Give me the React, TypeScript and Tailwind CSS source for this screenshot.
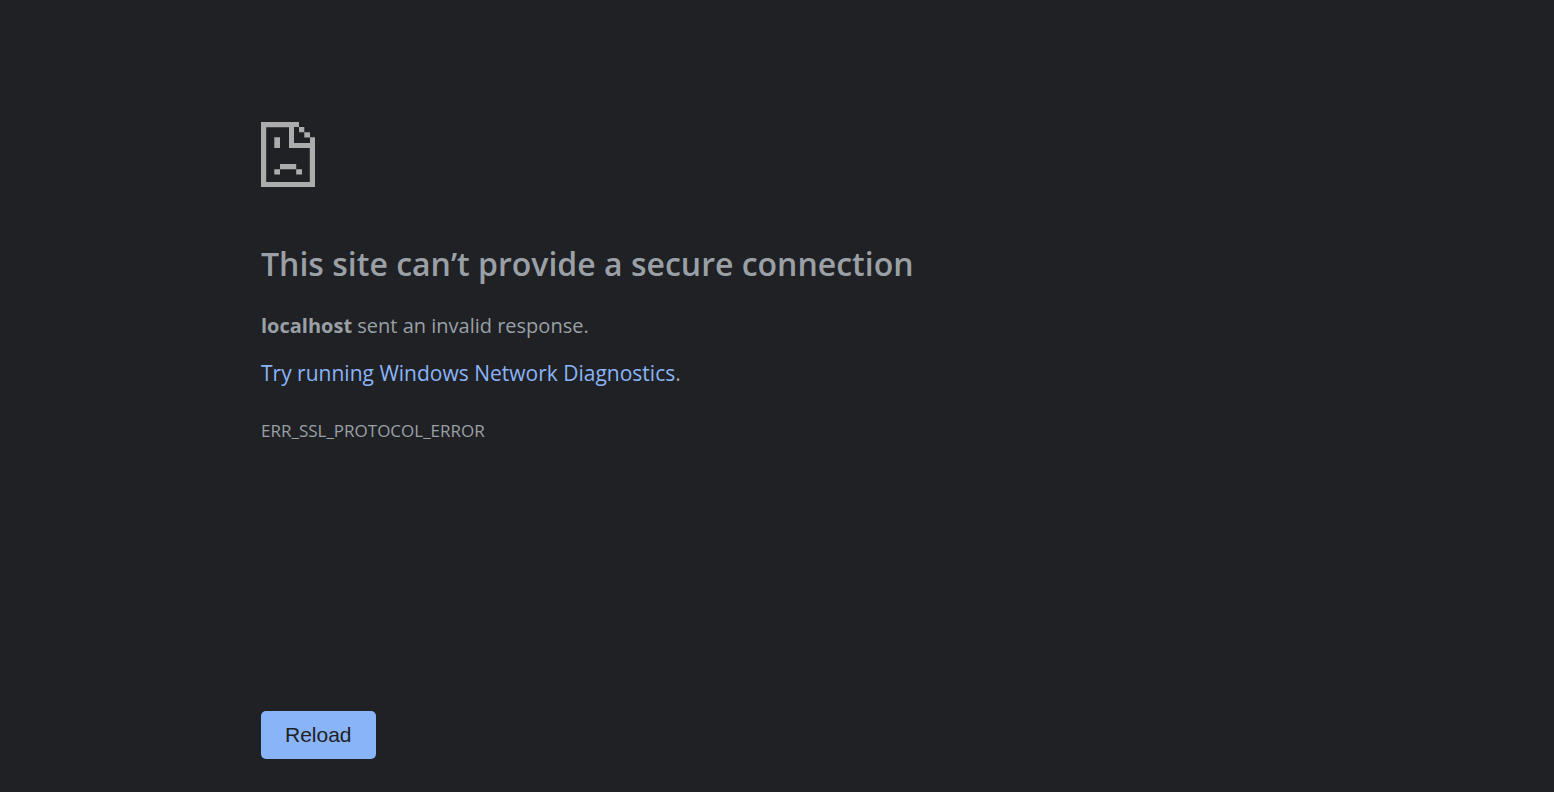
function SadPageIcon() {
  return (
    <svg
      className="block h-[65px] w-[54px] text-[#acacac]"
      viewBox="0 0 54 65"
      fill="currentColor"
      aria-hidden="true"
    >
      <path d="M0 0H38V5H33V21H49V15.3H54V65H0ZM5.2 5.2V60H48.8V26H28V5.2Z" fillRule="evenodd" />
      <path d="M38 5H43.3V10.3H38ZM43.3 10.3H49V15.6H43.3Z" />
      <path d="M13.3 15.3H19V26H13.3ZM19 42H35.2V47.2H19ZM13.3 47.2H19V52.4H13.3ZM35.2 47.2H41V52.4H35.2Z" />
    </svg>
  );
}

export default function App() {
  return (
    <div className="min-h-screen bg-[#202124] px-8 font-['Segoe_UI','Open_Sans',sans-serif] text-[#9aa0a6]">
      <main className="mx-auto max-w-[1032px] pt-[122px] pb-8">
        <SadPageIcon />
        <h1 className="mt-14 text-[32px] leading-[42px] font-semibold">
          This site can’t provide a secure connection
        </h1>
        <p className="mt-[25px] text-[20px] leading-8">
          <strong className="font-bold">localhost</strong> sent an invalid response.
        </p>
        <p className="mt-[15px] text-[21px] leading-8">
          <a href="#diagnostics" className="text-[#8ab4f8]">
            Try running Windows Network Diagnostics
          </a>
          .
        </p>
        <p className="mt-7 text-[17px] leading-7">ERR_SSL_PROTOCOL_ERROR</p>
        <button
          type="button"
          className="mt-[266px] block h-12 rounded-[5px] bg-[#8ab4f8] px-6 font-['Liberation_Sans',Arial,sans-serif] text-[21px] leading-6 text-[#202124]"
        >
          Reload
        </button>
      </main>
    </div>
  );
}
